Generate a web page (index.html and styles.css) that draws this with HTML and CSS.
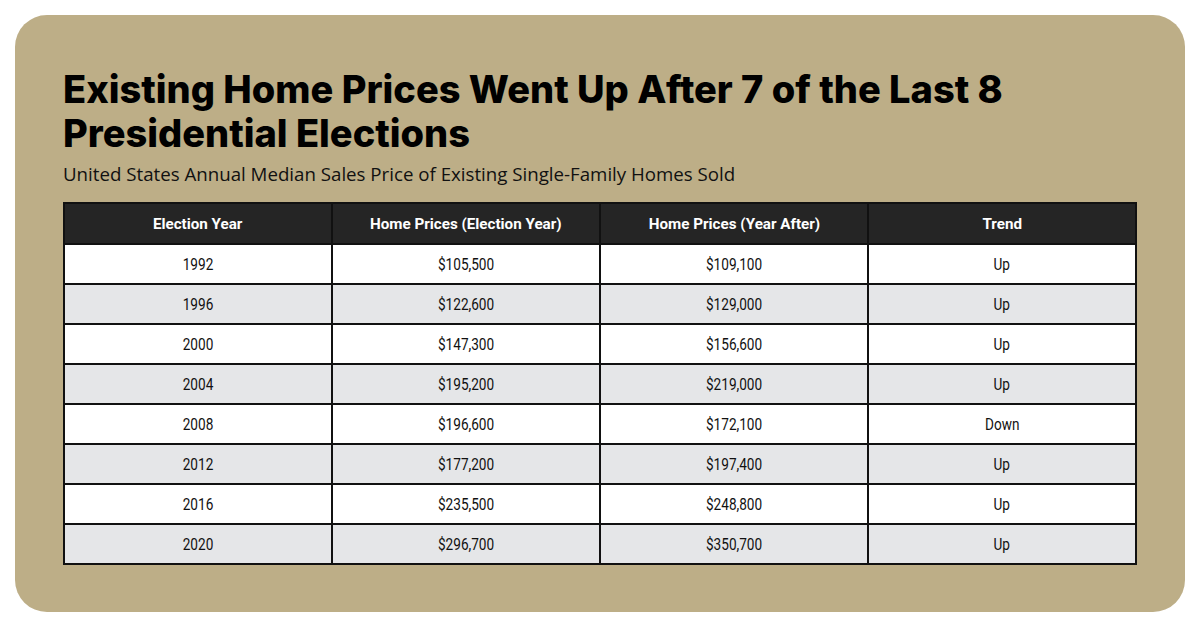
FILE: index.html
```html
<!DOCTYPE html>
<html>
<head>
<meta charset="utf-8">
<link rel="stylesheet" href="styles.css">
</head>
<body>
<div class="card">
  <h1 class="title">Existing Home Prices Went Up After 7 of the Last 8 Presidential Elections</h1>
  <p class="subtitle">United States Annual Median Sales Price of Existing Single-Family Homes Sold</p>
  <table class="data">
    <thead>
      <tr><th><span class="cx">Election Year</span></th><th><span class="cx">Home Prices (Election Year)</span></th><th><span class="cx">Home Prices (Year After)</span></th><th><span class="cx">Trend</span></th></tr>
    </thead>
    <tbody>
      <tr><td><span class="cx">1992</span></td><td><span class="cx">$105,500</span></td><td><span class="cx">$109,100</span></td><td><span class="cx">Up</span></td></tr>
      <tr><td><span class="cx">1996</span></td><td><span class="cx">$122,600</span></td><td><span class="cx">$129,000</span></td><td><span class="cx">Up</span></td></tr>
      <tr><td><span class="cx">2000</span></td><td><span class="cx">$147,300</span></td><td><span class="cx">$156,600</span></td><td><span class="cx">Up</span></td></tr>
      <tr><td><span class="cx">2004</span></td><td><span class="cx">$195,200</span></td><td><span class="cx">$219,000</span></td><td><span class="cx">Up</span></td></tr>
      <tr><td><span class="cx">2008</span></td><td><span class="cx">$196,600</span></td><td><span class="cx">$172,100</span></td><td><span class="cx">Down</span></td></tr>
      <tr><td><span class="cx">2012</span></td><td><span class="cx">$177,200</span></td><td><span class="cx">$197,400</span></td><td><span class="cx">Up</span></td></tr>
      <tr><td><span class="cx">2016</span></td><td><span class="cx">$235,500</span></td><td><span class="cx">$248,800</span></td><td><span class="cx">Up</span></td></tr>
      <tr><td><span class="cx">2020</span></td><td><span class="cx">$296,700</span></td><td><span class="cx">$350,700</span></td><td><span class="cx">Up</span></td></tr>
    </tbody>
  </table>
</div>
</body>
</html>
```

FILE: styles.css
```css
html, body {
  margin: 0;
  padding: 0;
  background: #ffffff;
}

.card {
  margin: 15px;
  width: 1170px;
  height: 597px;
  box-sizing: border-box;
  background: #bdae87;
  border-radius: 32px;
  padding: 52px 48px 0 48px;
}

.title {
  margin: 0;
  font-family: Inter, Lato, sans-serif;
  font-weight: 800;
  font-size: 38px;
  line-height: 44px;
  color: #000;
  width: 1000px;
}

.subtitle {
  margin: 7px 0 16px 0;
  font-family: "Open Sans", sans-serif;
  font-size: 18.7px;
  line-height: 24px;
  color: #111;
}

.data {
  width: 1074px;
  border-collapse: collapse;
  table-layout: fixed;
  border: 2px solid #111;
  font-family: Roboto, sans-serif;
  font-size: 16px;
  color: #111;
}

.data th, .data td {
  border: 2px solid #111;
  text-align: center;
  height: 38px;
  padding: 0;
}

.data th {
  background: #252525;
  color: #fff;
  font-weight: 700;
  font-size: 15.5px;
  height: 39px;
}

.cx {
  display: inline-block;
  transform: scaleX(0.85);
  white-space: nowrap;
}

.data th .cx {
  transform: scaleX(0.98);
}

.data tbody tr:nth-child(odd) td {
  background: #ffffff;
}

.data tbody tr:nth-child(even) td {
  background: #e5e6e8;
}
```
